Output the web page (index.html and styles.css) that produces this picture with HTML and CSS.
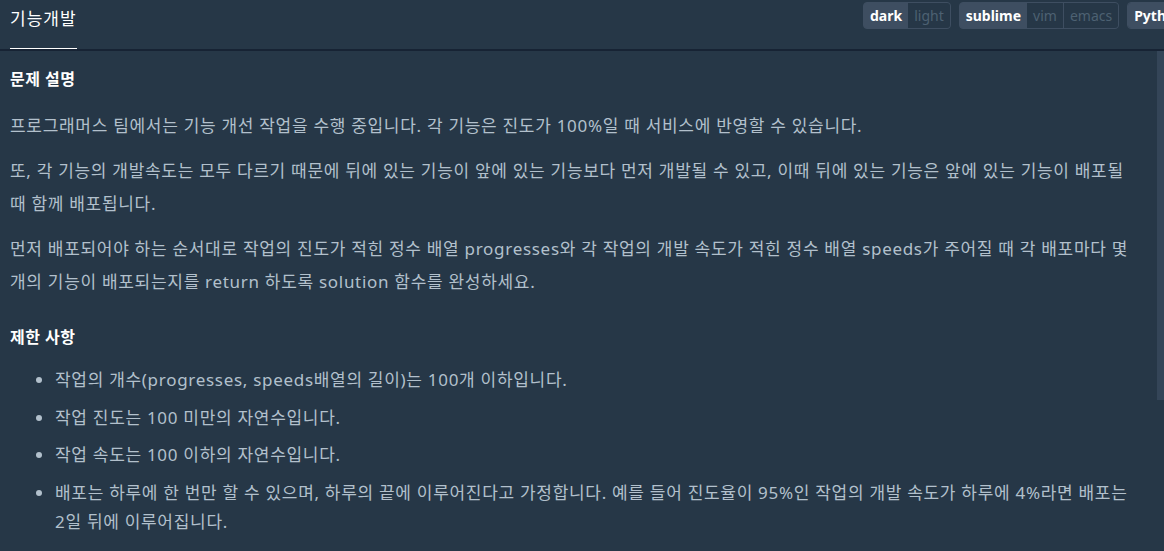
FILE: index.html
```html
<!DOCTYPE html>
<html lang="ko">
<head>
<meta charset="utf-8">
<title>기능개발</title>
<link rel="stylesheet" href="styles.css">
</head>
<body>
<div class="page">
  <header class="header">
    <div class="tabs">
      <div class="tab">기능개발</div>
    </div>
    <div class="toolbar">
      <div class="seg">
        <span class="opt on">dark</span><span class="opt">light</span>
      </div>
      <div class="seg">
        <span class="opt on">sublime</span><span class="opt">vim</span><span class="opt">emacs</span>
      </div>
      <div class="seg">
        <span class="opt on">Python3</span>
      </div>
    </div>
  </header>
  <main class="content">
    <h6 class="title">문제 설명</h6>
    <p class="para">프로그래머스 팀에서는 기능 개선 작업을 수행 중입니다. 각 기능은 진도가 100%일 때 서비스에 반영할 수 있습니다.</p>
    <p class="para">또, 각 기능의 개발속도는 모두 다르기 때문에 뒤에 있는 기능이 앞에 있는 기능보다 먼저 개발될 수 있고, 이때 뒤에 있는 기능은 앞에 있는 기능이 배포될 때 함께 배포됩니다.</p>
    <p class="para">먼저 배포되어야 하는 순서대로 작업의 진도가 적힌 정수 배열 progresses와 각 작업의 개발 속도가 적힌 정수 배열 speeds가 주어질 때 각 배포마다 몇 개의 기능이 배포되는지를 return 하도록 solution 함수를 완성하세요.</p>
    <h6 class="title title-gap">제한 사항</h6>
    <ul class="rules">
      <li>작업의 개수(progresses, speeds배열의 길이)는 100개 이하입니다.</li>
      <li>작업 진도는 100 미만의 자연수입니다.</li>
      <li>작업 속도는 100 이하의 자연수입니다.</li>
      <li>배포는 하루에 한 번만 할 수 있으며, 하루의 끝에 이루어진다고 가정합니다. 예를 들어 진도율이 95%인 작업의 개발 속도가 하루에 4%라면 배포는 2일 뒤에 이루어집니다.</li>
    </ul>
  </main>
  <div class="thumb"></div>
</div>
</body>
</html>
```

FILE: styles.css
```css
html, body {
  margin: 0;
  padding: 0;
  background: #263747;
  overflow: hidden;
}

.page {
  position: relative;
  width: 1164px;
  height: 551px;
  overflow: hidden;
  font-family: "Noto Sans", "Noto Sans CJK KR", sans-serif;
  color: #b2c0cc;
}

.header {
  display: grid;
  grid-template-columns: 863px 1fr;
  height: 51px;
  box-sizing: border-box;
  border-bottom: 2px solid #172334;
  overflow: hidden;
}

.tabs {
  display: flex;
  padding-left: 10px;
}

.tab {
  box-sizing: border-box;
  height: 51px;
  margin-bottom: -2px;
  padding-top: 6px;
  line-height: 24px;
  font-size: 17px;
  letter-spacing: 1px;
  color: #ffffff;
  border-bottom: 3px solid #ffffff;
  font-family: "Noto Sans CJK KR", sans-serif;
}

.toolbar {
  display: flex;
  align-items: flex-start;
  gap: 8px;
  padding-top: 2px;
  white-space: nowrap;
}

.seg {
  display: flex;
  flex: none;
  height: 27px;
  box-sizing: border-box;
  border: 1px solid #3e4e61;
  border-radius: 4px;
  background: #3e4e61;
  overflow: hidden;
}

.opt {
  display: flex;
  align-items: center;
  padding: 0 6px;
  font-size: 14px;
  color: #4d6172;
  background: #263747;
  border-left: 1px solid #3e4e61;
}

.opt.on {
  color: #ffffff;
  font-weight: 700;
  background: #3e4e61;
  border-left: none;
}

.opt.on + .opt {
  border-left: none;
}

.content {
  padding: 16px 10px 0 10px;
}

.title {
  margin: 0 0 18px 0;
  font-size: 16px;
  line-height: 24px;
  font-weight: 700;
  color: #ffffff;
  letter-spacing: 0.5px;
}

.title-gap {
  margin-top: 27px;
  margin-bottom: 16px;
}

.para {
  margin: 0 0 12px 0;
  font-size: 17px;
  letter-spacing: 0.7px;
  line-height: 33px;
  padding-right: 14px;
  word-break: keep-all;
}

.rules {
  margin: 0;
  padding-left: 45px;
  font-size: 17px;
  letter-spacing: 0.7px;
  line-height: 29px;
  word-break: keep-all;
}

.rules li {
  margin-bottom: 8.5px;
  padding-right: 14px;
}

.thumb {
  position: absolute;
  top: 51px;
  right: 0;
  width: 7px;
  height: 349px;
  background: #344558;
}
```
